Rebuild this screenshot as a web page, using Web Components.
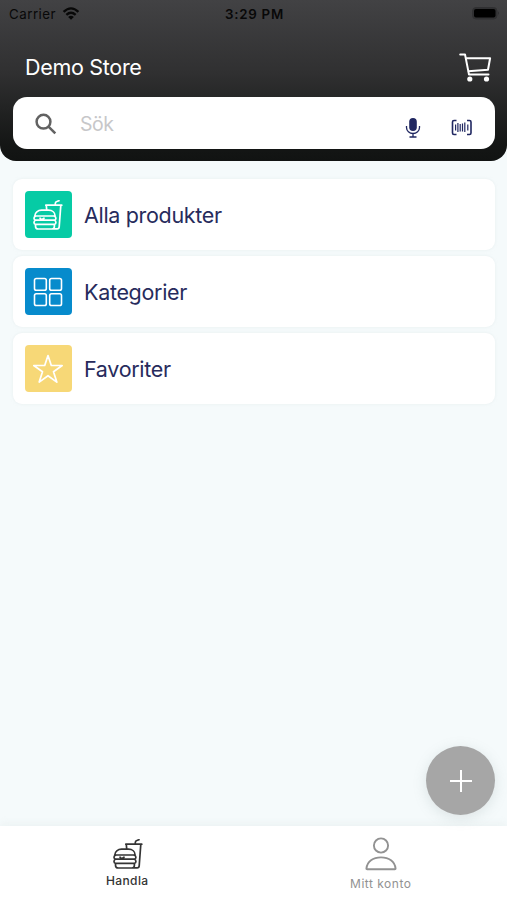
<!DOCTYPE html>
<html lang="sv">
<head>
<meta charset="utf-8">
<title>Demo Store</title>
<style>
html,body{margin:0;height:100%}
body{font-family:Inter,"Liberation Sans",sans-serif;overflow:hidden}
</style>
</head>
<body>
<store-app></store-app>
<script>
const icons = {
  wifi: ['0 0 18 14', '<g fill="none" stroke="currentColor" stroke-width="2.5"><path d="M1 5.2Q9-2.2 17 5.2M4 8.4q5-4.4 10 0"/></g><path fill="currentColor" d="M9 13.8 5.9 10.7q3.1-2.6 6.2 0z"/>'],
  battery: ['0 0 28 13', '<rect x=".5" y=".5" width="24.500" height="11.500" rx="3.500" fill="#303032" stroke="#303032"/><rect x="2" y="2" width="21.500" height="8.500" rx="2" fill="#000"/><path d="M26.200 4.200q1.800 2 0 4z" fill="#29292b"/>'],
  cart: ['0 0 33 29', '<g fill="none" stroke="#fff" stroke-width="2" stroke-linejoin="round" stroke-linecap="round"><path d="M1.200 1.400H6l4 20.200h19.500M6.800 5.300h24.300L29 16.800 9.200 18.300"/></g><circle cx="10.800" cy="26" r="2.600" fill="#fff"/><circle cx="27.500" cy="26" r="2.600" fill="#fff"/>'],
  search: ['0 0 22 22', '<g fill="none" stroke="#626262" stroke-width="2.500"><circle cx="8.500" cy="8.700" r="6.900"/><path d="m13.500 13.600 6.800 6.800"/></g>'],
  mic: ['0 0 16 22', '<rect x="4.200" y="1" width="7.600" height="13" rx="3.800" fill="#202761"/><path d="M1.500 9v1.500a6.500 6 0 0 0 13 0V9M8 16.500v3.500M4.500 20h7" fill="none" stroke="#202761" stroke-width="1.300"/>'],
  barcode: ['0 0 22 18', '<g fill="none" stroke="#202761"><path stroke-width="1.600" d="M5.500 1.500H3Q1.500 1.500 1.500 3v11q0 1.500 1.500 1.500h2.500M16 1.500h2.500q1.500 0 1.500 1.500v11q0 1.500-1.500 1.500H16"/><path stroke-width="1.200" d="M4.600 5.500v6M6.900 4v9M9.200 5v7.500M11.500 4.500v8M13.800 3.500V13M16.800 5.500v6"/></g>'],
  food: ['0 0 30 30', '<g fill="none" stroke="currentColor" stroke-width="1.700" stroke-linecap="round" stroke-linejoin="round"><path d="M1.800 16C1.800 12.500 5 10.200 8.500 10.200h7c3.800 0 6.600 2.300 6.600 5.800z"/><path d="M2.500 16.200Q1 16.700 1 18.300t1.500 1.900h19q1.400-.400 1.400-1.900t-1.400-2.100M7 18.200l1.800 1.600 2.200-1.600M2.500 20.200Q1 20.800 1 22.400T2.500 24.300h19q1.400-.4 1.400-1.900t-1.400-2.200M2.500 24.500v1.700Q2.500 29 5.300 29h13.500q2.600 0 2.600-2.800v-1.700M13.700 9.800l-.4-4.500M12.800 5.200h16M27.800 5.400l-1.600 21.500q-.2 2-2 2h-3M22.300 5V3.500q0-1.500 1.500-2l2.200-.8"/></g>'],
  grid: ['0 0 30 30', '<g fill="none" stroke="currentColor" stroke-width="1.600"><rect x="1.500" y="1.500" width="11.800" height="11.800" rx="1.800"/><rect x="16.700" y="1.500" width="11.800" height="11.800" rx="1.800"/><rect x="1.500" y="16.700" width="11.800" height="11.800" rx="1.800"/><rect x="16.700" y="16.700" width="11.800" height="11.800" rx="1.800"/></g>'],
  star: ['0 0 30 30', '<path d="m15 1.500 3.300 10h10.900l-8.700 6.300 3.300 10.300L15 21.700l-8.800 6.400 3.300-10.300L.8 11.500h10.900z" fill="none" stroke="currentColor" stroke-width="1.700" stroke-linejoin="round"/>'],
  plus: ['0 0 22 22', '<path d="M11 0v22M0 11h22" stroke="#fff" stroke-width="2"/>'],
  person: ['0 0 32 34', '<g fill="none" stroke="currentColor" stroke-width="1.900" stroke-linejoin="round"><circle cx="16" cy="8.500" r="7.100"/><path d="M1.400 31.600C2.200 24.500 8 20.400 16 20.400s13.800 4.100 14.600 11.200q0 .7-.8.700H2.200q-.8 0-.8-.7z"/></g>']
};

function element(name, template) {
  customElements.define(name, class extends HTMLElement {
    connectedCallback() {
      if (!this.shadowRoot) {
        const root = this.attachShadow({mode: 'open'});
        root.innerHTML = typeof template === 'function' ? template(this) : template;
      }
    }
  });
}

element('ui-icon', host => {
  const [box, drawing] = icons[host.getAttribute('name')];
  return `<style>:host{display:block;flex:none}svg{display:block;width:100%;height:100%}</style><svg viewBox="${box}" aria-hidden="true">${drawing}</svg>`;
});

element('status-bar', `<style>
  :host{display:grid;grid-template-columns:1fr auto 1fr;height:28px;align-items:center;color:#080808;font-size:13.3px;box-sizing:border-box;padding:0 7px 0 9px}
  .left{display:flex;align-items:center;gap:6px;letter-spacing:.5px}
  .left ui-icon{width:18px;height:13px;margin-top:-2px}
  .time{font-weight:600;letter-spacing:.75px}
  .battery{width:28px;height:13px;justify-self:end;margin-top:-1px}
  </style><div class="left"><span>Carrier</span><ui-icon name="wifi"></ui-icon></div><div class="time">3:29 PM</div><ui-icon class="battery" name="battery"></ui-icon>`);

element('search-field', `<style>
  :host{display:flex;align-items:center;height:52px;margin:0 12px 0 13px;border-radius:14px;background:#fff;box-sizing:border-box;padding:0 22px 0 22px}
  .search{width:22px;height:22px;margin-top:2px}
  .hint{flex:1;margin:2px 0 0 23px;color:#c7c7c9;font-size:19.5px;letter-spacing:-.5px}
  .mic{width:16px;height:22px;margin:10px 30px 0 0}
  .barcode{width:22px;height:18px;margin-top:10px}
  </style><ui-icon class="search" name="search"></ui-icon><span class="hint">Sök</span><ui-icon class="mic" name="mic"></ui-icon><ui-icon class="barcode" name="barcode"></ui-icon>`);

element('store-header', `<style>
  :host{display:block;height:161px;box-sizing:border-box;border-radius:0 0 16px 16px;background:linear-gradient(#424244,#303031 45%,#141615 90%,#111312)}
  .title{display:flex;height:69px;align-items:center;justify-content:space-between;padding:0 15px 0 25px;color:#fff}
  .name{font-size:21.500px;letter-spacing:-.3px;margin-top:9px}
  .cart{width:33px;height:29px;margin-top:9px}
  </style><status-bar></status-bar><div class="title"><span class="name"><slot></slot></span><ui-icon class="cart" name="cart"></ui-icon></div><search-field></search-field>`);

element('menu-card', host => `<style>
  :host{display:flex;align-items:center;height:71px;background:#fff;border-radius:9px;box-shadow:0 0 3px #dce5e688;box-sizing:border-box;padding-left:12px;color:#272b5c}
  .tile{display:grid;place-items:center;width:47px;height:47px;border-radius:4px;background:${host.getAttribute('color')};color:#fff}
  ui-icon{width:30px;height:30px;margin-right:1px}
  .label{font-size:21.500px;margin-left:12px;letter-spacing:-.32px}
  </style><div class="tile"><ui-icon name="${host.getAttribute('icon')}"></ui-icon></div><span class="label"><slot></slot></span>`);

element('tab-item', host => `<style>
  :host{display:flex;flex-direction:column;align-items:center;flex:1;font-size:12px;letter-spacing:.5px;color:#929292;padding:11px 0 0 1px}
  :host([selected]){color:#343434;font-weight:500;letter-spacing:.4px;padding:13px 0 0 1px}
  ui-icon{width:32px;height:34px}
  :host([selected]) ui-icon{width:30px;height:30px;margin-left:2px}
  span{line-height:16px;margin-top:5px}
  :host([selected]) span{margin-top:4px}
  </style><ui-icon name="${host.getAttribute('icon')}"></ui-icon><span><slot></slot></span>`);

element('tab-bar', `<style>:host{display:flex;height:74px;background:#fff;box-shadow:0 -2px 8px #dce5e666}</style><slot></slot>`);

element('add-button', `<style>
  :host{display:grid;place-items:center;width:69px;height:69px;border-radius:50%;background:#a6a6a6;box-shadow:0 3px 14px #788b8b33}
  ui-icon{width:22px;height:22px}
  </style><ui-icon name="plus"></ui-icon>`);

element('store-app', `<style>
  :host{display:flex;flex-direction:column;position:relative;width:507px;height:900px;background:#f5fafb}
  main{display:flex;flex-direction:column;gap:6px;flex:1;padding:18px 12px 0 13px}
  add-button{position:absolute;right:12px;bottom:85px}
  </style><store-header>Demo Store</store-header>
  <main><menu-card icon="food" color="#06cba5">Alla produkter</menu-card><menu-card icon="grid" color="#078bcc">Kategorier</menu-card><menu-card icon="star" color="#f7d877">Favoriter</menu-card></main>
  <tab-bar><tab-item icon="food" selected>Handla</tab-item><tab-item icon="person">Mitt konto</tab-item></tab-bar><add-button></add-button>`);
</script>
</body>
</html>
